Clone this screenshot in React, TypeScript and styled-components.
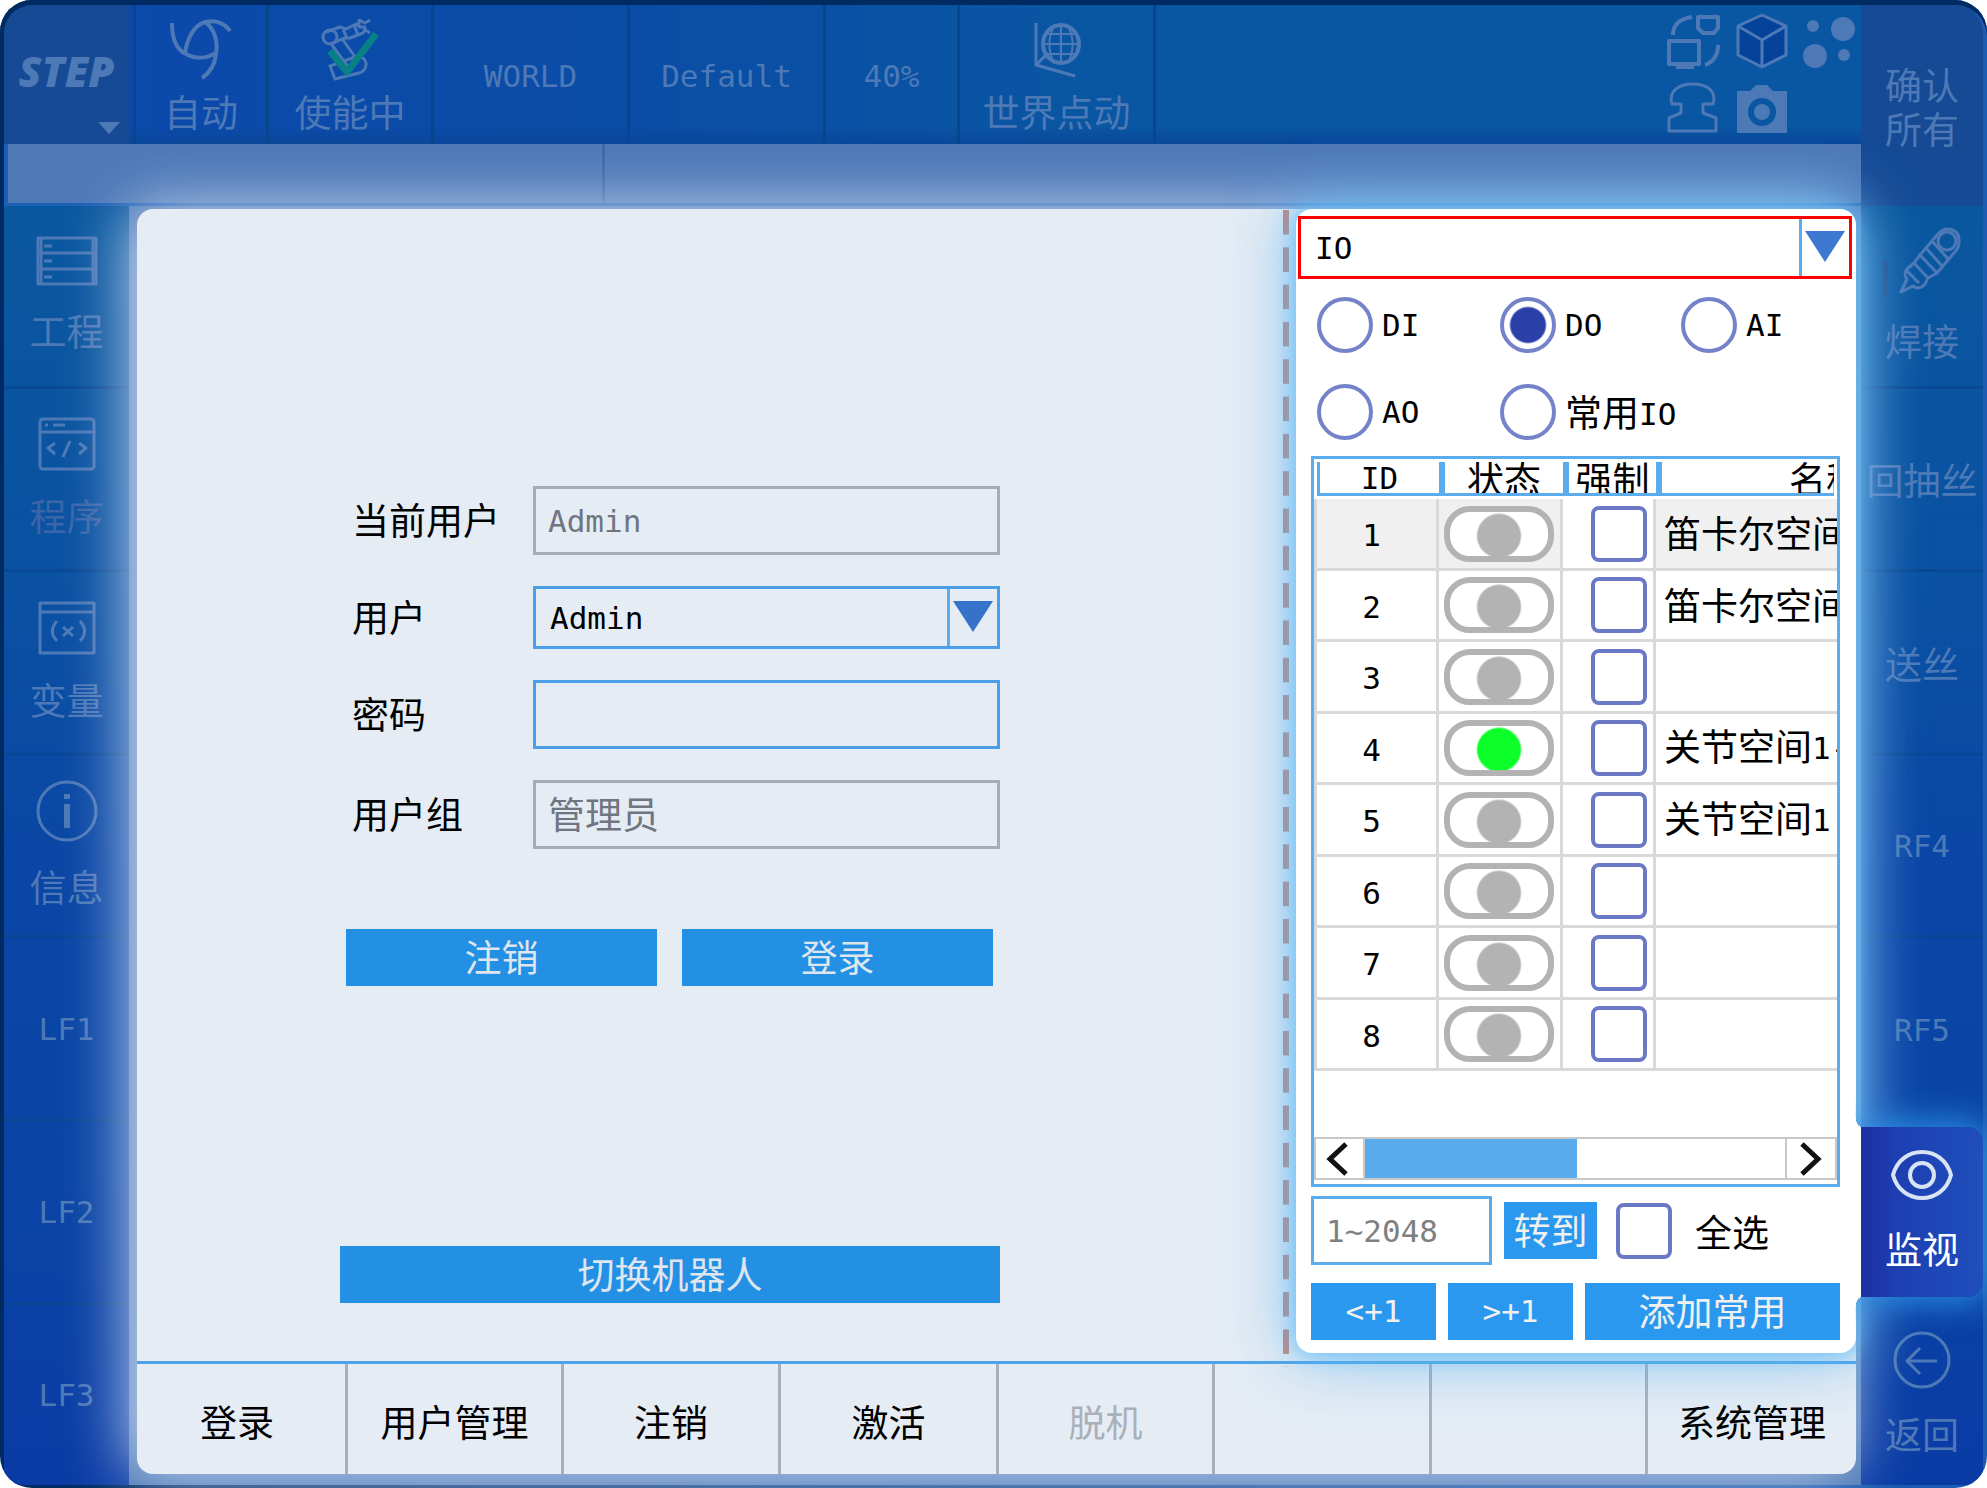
import React from "react";
import styled, { createGlobalStyle, css } from "styled-components";

const MONO = `"DejaVu Sans Mono", "Noto Sans CJK SC", monospace`;
const HAN = `"Noto Sans CJK SC", "Noto Sans", sans-serif`;
const DIM = "#4d79b7";
const SKY = "#5aaced";

const Global = createGlobalStyle`
  *, *::before, *::after { box-sizing: border-box; }
  body { margin: 0; background: #fff; }
  button, input, select { font: inherit; color: inherit; margin: 0; }
`;

const Latin = styled.span`
  font-family: ${MONO};
  font-size: 31px;
  vertical-align: 2px;
`;

const Device = styled.div`
  width: 100%;
  min-height: 100vh;
  display: grid;
  grid-template-columns: 125px minmax(0, 1fr) 122px;
  grid-template-rows: 139px 62px minmax(0, 1fr);
  padding: 5px 4px 3px;
  border-radius: 32px;
  overflow: hidden;
  background: linear-gradient(90deg, #002a62 0, #002a62 4px, #1c5cb4 100%);
  box-shadow: inset 0 5px #002a62;
  font-family: ${HAN};
  font-size: 37px;
  line-height: 44px;
  color: #000;
`;

const PlainButton = styled.button`
  border: 0;
  padding: 0;
  background: none;
  cursor: pointer;
`;

const Logo = styled(PlainButton)`
  position: relative;
  padding-bottom: 8px;
  background: #164a95;
  color: ${DIM};
  font: italic 800 42px/48px "Open Sans", "Noto Sans", sans-serif;
  border-radius: 28px 0 0 0;

  &::after {
    content: "";
    position: absolute;
    right: 9px;
    bottom: 10px;
    border: 11px solid transparent;
    border-top: 12px solid ${DIM};
    border-bottom: 0;
  }
`;

const TopBar = styled.div`
  display: flex;
  min-width: 0;
  color: ${DIM};
  background:
    linear-gradient(180deg, transparent 122px, #09479a 139px),
    linear-gradient(90deg, #0b49ab 0%, #0a4da6 30%, #0956a2 55%, #0956a2 100%);
`;

const Status = styled(PlainButton)<{ $w: number }>`
  width: ${(p) => p.$w}px;
  flex: none;
  display: flex;
  flex-direction: column;
  align-items: center;
  justify-content: center;
  gap: 8px;
  padding-top: 3px;
  border-right: 3px solid #08458a;
  svg { display: block; }

  &:first-child {
    margin-left: 4px;
    border-left: 3px solid #08458a;
  }
`;

const Tools = styled.div`
  margin-left: auto;
  display: grid;
  grid-template-columns: repeat(3, 56px);
  grid-template-rows: 56px 56px;
  column-gap: 12px;
  row-gap: 12px;
  padding: 8px 4px 0 0;
`;

const Confirm = styled(PlainButton)`
  grid-row: span 2;
  background: #164a95;
  color: ${DIM};
  border-radius: 0 28px 0 0;
  display: grid;
  place-content: center;
`;

const Tray = styled.div`
  grid-column: 1 / 3;
  display: grid;
  grid-template-columns: 597px 1fr;
  border-bottom: 3px solid #1c60b6;
  border-left: 4px solid #1c60b6;
  background: #4d79b7;
`;

const TrayCell = styled.div`
  border-right: 3px solid #3c68a6;
  &:last-child { border: 0; }
`;

const Side = styled.nav`
  display: grid;
  grid-template-rows: 183px 183px 184px 182px 184px 183px minmax(0, 1fr);
  background: linear-gradient(180deg, #0a589f 0%, #0a51a2 30%, #0a46a6 52%, #0a45a6 75%, #0a3ba5 100%);
  color: ${DIM};
`;

const SideKey = styled(PlainButton)<{ $faint?: boolean; $last?: boolean; $icon?: boolean }>`
  min-width: 0;
  display: flex;
  flex-direction: column;
  align-items: center;
  justify-content: center;
  gap: 22px;
  padding-bottom: ${(p) => (p.$icon ? 4 : 0)}px;
  white-space: nowrap;
  border-bottom: ${(p) => (p.$last ? "0" : "3px solid rgba(8, 70, 145, 0.8)")};
  color: ${(p) => (p.$faint ? "#3a65a8" : "inherit")};
  svg { display: block; color: ${DIM}; }
`;

const Watch = styled(PlainButton)`
  position: relative;
  z-index: 3;
  margin: 5px 0 8px;
  padding-bottom: 4px;
  display: flex;
  flex-direction: column;
  align-items: center;
  justify-content: center;
  gap: 26px;
  color: #fff;
  border-radius: 0 16px 16px 0;
  background: linear-gradient(90deg, #1b2fa2 0, #1d3fb2 30%, #1f4fbc 100%);
  box-shadow: 0 0 34px 4px #2d93e6;
  clip-path: inset(-50px -4px -50px -6px);

  &::before {
    content: "";
    position: absolute;
    left: -6px;
    top: -14px;
    bottom: -14px;
    width: 6px;
    background:
      radial-gradient(ellipse 6px 14px at 100% 0, transparent 96%, #fff) top / 6px 14px no-repeat,
      linear-gradient(#fff, #fff) center / 6px calc(100% - 28px) no-repeat,
      radial-gradient(ellipse 6px 14px at 100% 100%, transparent 96%, #fff) bottom / 6px 14px no-repeat;
  }
  svg { display: block; color: #d8e4f6; }
`;

const Stage = styled.main`
  min-width: 0;
  display: grid;
  padding: 3px 5px 11px 8px;
  background: #4d79b7;
`;

const Sheet = styled.div`
  position: relative;
  z-index: 1;
  min-width: 0;
  display: grid;
  grid-template-columns: minmax(0, 1fr) 576px;
  grid-template-rows: minmax(0, 1fr) 113px;
  border-radius: 16px;
  background: #e5ecf4;
  box-shadow: -8px 0 62px 0 rgba(215, 228, 250, 0.9);
`;

const LoginArea = styled.section`
  padding: 277px 0 0 203px;
  display: flex;
  flex-direction: column;
  align-items: flex-start;
`;

const Fields = styled.form`
  display: grid;
  grid-template-columns: 181px 467px;
  row-gap: 31px;
  padding-left: 12px;
  align-items: center;

  label { padding-bottom: 3px; }
`;

const boxLook = css`
  width: 100%;
  border: 3px solid #4c9fe6;
  border-radius: 0;
  outline: 0;
  background: transparent;
`;

const Field = styled.input<{ $latin?: boolean }>`
  ${boxLook}
  height: 69px;
  padding: 0 12px 3px;
  color: #707680;
  ${(p) => p.$latin && css`font-family: ${MONO}; font-size: 31px; padding-bottom: 0;`}
  &:read-only { border-color: #a4acb8; }
`;

const SelectWrap = styled.div<{ $alarm?: boolean }>`
  position: relative;
  height: 63px;
  color: ${(p) => (p.$alarm ? "#3d78d0" : "#3672ca")};

  select {
    ${boxLook}
    appearance: none;
    height: 100%;
    padding: 0 60px 0 14px;
    color: #000;
    font-family: ${MONO};
    font-size: 31px;
    border-color: ${(p) => (p.$alarm ? "#ff0000" : "#4c9fe6")};
  }
  &::before {
    content: "";
    position: absolute;
    right: 50px;
    top: 3px;
    bottom: 3px;
    width: 3px;
    background: ${SKY};
    pointer-events: none;
  }
  &::after {
    content: "";
    position: absolute;
    right: 7px;
    top: 15px;
    border: 20px solid transparent;
    border-top: 31px solid;
    border-bottom: 0;
    pointer-events: none;
  }
`;

const Action = styled.button`
  height: 57px;
  padding: 0 0 4px;
  border: 0;
  background: #2490e4;
  color: #dfe5ee;
  cursor: pointer;
`;

const LoginButtons = styled.div`
  display: grid;
  grid-template-columns: 311px 311px;
  gap: 25px;
  padding-left: 6px;
  margin-top: 80px;
`;

const SwitchRobot = styled(Action)`
  width: 660px;
  margin-top: 260px;
`;

const Tabs = styled.nav`
  grid-column: 1 / 3;
  display: grid;
  grid-template-columns: 211fr 216fr 217fr 218fr 216fr 217fr 216fr 208fr;
  border-top: 3px solid #4fa3e8;
`;

const Tab = styled(PlainButton)`
  padding-top: 4px;
  border-right: 3px solid #a8b0bc;
  white-space: nowrap;
  color: #000;
  &:disabled { color: #a9b0ba; }
  &:first-child { padding-right: 8px; }
  &:last-child { border: 0; }
`;

const MonitorSlot = styled.div`
  display: flex;
  padding: 0 0 8px 8px;
  position: relative;

  &::before {
    content: "";
    position: absolute;
    left: 3px;
    top: 1px;
    bottom: -6px;
    width: 6px;
    background: linear-gradient(180deg, #c4857a 25px, transparent 25px) top / 6px 37px round;
  }
`;

const Monitor = styled.section`
  position: relative;
  flex: 1;
  min-width: 0;
  margin-left: 8px;
  background: #fff;
  border-radius: 16px;
  box-shadow: 0 0 18px 2px rgba(96, 190, 248, 0.7), 0 0 64px 2px rgba(90, 180, 244, 0.8);
  padding: 7px 4px 0 2px;
`;

const MonitorBody = styled.div`
  padding: 0 12px 0 13px;
`;

const Radios = styled.fieldset`
  border: 0;
  margin: 0;
  padding: 18px 0 16px 6px;
  display: grid;
  grid-template-columns: 183px 181px 1fr;
  row-gap: 31px;
`;

const RadioLabel = styled.label`
  display: flex;
  align-items: center;
  gap: 9px;
  height: 56px;
  white-space: nowrap;

  input {
    appearance: none;
    flex: none;
    width: 56px;
    height: 56px;
    border: 4px solid #7482ca;
    border-radius: 50%;
    background: #fff;
  }
  input:checked {
    background: radial-gradient(circle, #2b3fa9 17px, #fff 19px);
  }
`;

const TableFrame = styled.div`
  height: 731px;
  border: 3px solid ${SKY};
  display: flex;
  flex-direction: column;
  overflow: hidden;
`;

const Grid = styled.table`
  table-layout: fixed;
  width: 100%;
  border-collapse: separate;
  border-spacing: 0;
`;

const HeadCell = styled.th`
  height: 40px;
  padding: 3px 0;
  font-weight: 400;
  overflow: hidden;
  white-space: nowrap;
`;

const HeadLabel = styled.div<{ $edge?: boolean; $end?: boolean }>`
  height: 34px;
  display: flex;
  align-items: center;
  justify-content: ${(p) => (p.$end ? "flex-end" : "center")};
  overflow: hidden;
  margin: 0 ${(p) => (p.$end ? 3 : 0)}px 0 ${(p) => (p.$edge ? 3 : 0)}px;
  border-bottom: 3px solid ${SKY};
  border-left: ${(p) => (p.$edge ? 3 : 6)}px solid ${SKY};
`;

const Clip = styled.span`
  width: 45px;
  flex: none;
  overflow: hidden;
`;

const Row = styled.tr<{ $lit?: boolean }>`
  background: ${(p) => (p.$lit ? "#f0f0f0" : "#fff")};
  td { height: 72px; }
  &:nth-child(even) td { height: 71px; }
`;

const Cell = styled.td<{ $white?: boolean; $name?: boolean; $num?: boolean }>`
  padding: ${(p) => (p.$name ? "0 0 3px 8px" : p.$num ? "0 10px 0 0" : "0 2px 0 0")};
  text-align: ${(p) => (p.$name ? "left" : "center")};
  border-right: ${(p) => (p.$name ? 0 : 3)}px solid #d9d9d9;
  border-left: ${(p) => (p.$num ? 3 : 0)}px solid #d9d9d9;
  border-bottom: 3px solid #d9d9d9;
  ${(p) => p.$white && "background: #fff;"}
  overflow: hidden;
  white-space: nowrap;
`;

const Lamp = styled.span<{ $on?: boolean }>`
  display: block;
  width: 110px;
  height: 56px;
  margin: 0 auto;
  border: 6px solid #b3b3b3;
  border-radius: 26px;
  background: radial-gradient(circle at 50% 54%, ${(p) => (p.$on ? "#0dff2a" : "#b3b3b3")} 21px, #fff 23px);
`;

const Tick = styled.input`
  appearance: none;
  display: block;
  flex: none;
  width: 56px;
  height: 56px;
  border: 4px solid #6b78c5;
  border-radius: 8px;
  background: #fff;
`;

const TickHolder = styled.div`
  display: flex;
  justify-content: flex-end;
  padding-right: 4px;
`;

const Scroll = styled.div`
  margin-top: auto;
  margin-bottom: 4px;
  height: 43px;
  flex: none;
  display: grid;
  grid-template-columns: 49px 1fr 50px;
  border: 2px solid #c8c8c8;
`;

const Arrow = styled(PlainButton)`
  display: grid;
  place-items: center;
  border: 0 solid #c8c8c8;
  &:first-child { border-right-width: 2px; padding-right: 6px; }
  &:last-child { border-left-width: 2px; }
`;

const Thumb = styled.div`
  width: 212px;
  background: ${SKY};
`;

const GoRow = styled.div`
  display: flex;
  align-items: center;
  margin-top: 9px;
`;

const GoInput = styled(Field)`
  width: 181px;
  border-color: ${SKY};
  padding: 0 12px;
  margin-right: 12px;
  &::placeholder { color: #808080; opacity: 1; }
`;

const BlueButton = styled(Action)<{ $w?: number }>`
  background: #2998ee;
  color: #f0f0f0;
  width: ${(p) => (p.$w ? `${p.$w}px` : "auto")};
`;

const AllLabel = styled.label`
  display: flex;
  align-items: center;
  gap: 23px;
  margin-left: 19px;
`;

const StepRow = styled.div`
  display: grid;
  grid-template-columns: 125px 125px 1fr;
  gap: 12px;
  margin-top: 18px;
`;

type G = { w: number; h: number; box: string; children: React.ReactNode; sw?: number };
const Glyph = ({ w, h, box, children, sw = 3 }: G) => (
  <svg width={w} height={h} viewBox={box} fill="none" stroke="currentColor" strokeWidth={sw} strokeLinejoin="round" aria-hidden="true">
    {children}
  </svg>
);

const AutoIcon = () => (
  <Glyph w={64} h={62} box="0 0 64 62" sw={4}>
    <path d="M3 4C3 20 8 31 17 35c9 5 21 5 29-1M61 12C55 3 45 1 36 3 25 6 18 20 16 34M36 3c10 7 13 20 11 32-1 12-7 19-14 24" />
  </Glyph>
);

const RobotIcon = () => (
  <Glyph w={64} h={62} box="0 0 64 62" sw={3}>
    <path d="M8 13l14-5 6 2 10-5 4 3 6 0M12 25l15-6 5 0 13-5 3-5M24 8l5 11M36 6l4 10M41 6V1l6 3 5-3M46 10l6 4M14 26l16 22M25 21l15 21M12 47l25-9c14-3 14 14 4 16l-24 6z" />
    <circle cx="12" cy="18" r="7" />
    <path d="M12 32l17 21L58 15" stroke="#078186" strokeWidth="7" />
  </Glyph>
);

const WorldIcon = () => (
  <Glyph w={50} h={62} box="0 0 50 62" sw={2}>
    <ellipse cx="29" cy="25" rx="18" ry="19" strokeWidth="4" />
    <path d="M29 5v40M11 25h36M14 15h30M14 35h30M22 7c-6 12-6 25 0 37M36 7c6 12 6 25 0 37" />
    <path d="M4 4v42l39 11M4 46l12-12" strokeWidth="3" />
  </Glyph>
);

const SwapIcon = () => (
  <Glyph w={56} h={56} box="0 0 56 56">
    <path d="M4 28h30v23H4zM11 55h18M33 4h20v11l-4 5h-11l-5-5zM8 22C8 12 14 6 27 4M53 32c0 10-5 17-13 20" strokeWidth="4" />
  </Glyph>
);
const CubeIcon = () => (
  <Glyph w={56} h={56} box="0 0 56 56">
    <path d="M29 2l24 11v29L29 54 5 42V13z" fill="#05439a" />
    <path d="M5 13l24 14 24-14M29 27v27" />
  </Glyph>
);
const DotsIcon = () => (
  <svg width="56" height="56" viewBox="0 0 56 56" fill="currentColor" aria-hidden="true">
    <circle cx="12" cy="13" r="6" /><circle cx="42" cy="16" r="12" /><circle cx="14" cy="43" r="12" /><circle cx="43" cy="42" r="6" />
  </svg>
);
const StampIcon = () => (
  <Glyph w={56} h={56} box="0 0 56 56">
    <path d="M4 50V37l12-5v-9H7C3 10 14 3 28 3s24 7 20 20H38v9l13 5v13z" />
  </Glyph>
);
const CameraIcon = () => (
  <svg width="56" height="56" viewBox="0 0 56 56" fill="currentColor" aria-hidden="true">
    <path fillRule="evenodd" d="M4 10h13l6-6h11l6 6h14v42H4zM29 17a14 14 0 1 0 0 28 14 14 0 0 0 0-28z" />
    <circle cx="29" cy="31" r="8" />
  </svg>
);

const ProjectIcon = () => (
  <Glyph w={62} h={50} box="0 0 62 50">
    <rect x="2" y="2" width="58" height="46" /><path d="M2 17h58M2 33h58M5 2v46M57 2v46M8 10h8M8 25h8M8 41h8" />
  </Glyph>
);
const CodeIcon = () => (
  <Glyph w={58} h={54} box="0 0 58 54">
    <rect x="2" y="2" width="54" height="50" rx="3" /><path d="M2 15h54M7 8h3M15 8h12M17 26l-7 5 7 6M41 26l7 5-7 6M32 24l-7 16" />
  </Glyph>
);
const VarIcon = () => (
  <Glyph w={58} h={54} box="0 0 58 54">
    <rect x="2" y="2" width="54" height="50" /><path d="M2 11h54M19 20c-6 7-6 14 0 20M42 20c6 7 6 14 0 20M25 26l10 9M35 26l-10 9" />
  </Glyph>
);
const InfoIcon = () => (
  <Glyph w={62} h={62} box="0 0 62 62">
    <circle cx="31" cy="31" r="29" /><path d="M31 24v24M31 14v5" strokeWidth="6" />
  </Glyph>
);
const WeldIcon = () => (
  <Glyph w={80} h={70} box="-16 0 80 70">
    <path d="M40 8c8-9 22-5 21 8 0 5-2 8-5 11L39 47 22 29z" />
    <circle cx="49" cy="15" r="9" />
    <path d="M34 15l17 19M28 22l17 19M22 29l-6 8 14 15 9-5M16 37l-7 6c-3 4-2 8 0 10l-6 13 12-6c5 4 11 1 13-4l2-4M8 44l13 13" />
    <path d="M-13 34v38" stroke="#164a8c" strokeWidth="5" />
  </Glyph>
);
const EyeIcon = () => (
  <Glyph w={62} h={50} box="0 0 62 50" sw={4}>
    <path d="M2 25C6 10 18 2 31 2s25 8 29 23C56 40 44 48 31 48S6 40 2 25z" /><circle cx="31" cy="25" r="12" />
  </Glyph>
);
const BackIcon = () => (
  <Glyph w={58} h={58} box="0 0 58 58">
    <circle cx="29" cy="29" r="27" /><path d="M44 30H15M27 17L14 30l13 13" />
  </Glyph>
);

const names = ["笛卡尔空间", "笛卡尔空间", "", "关节空间|1-", "关节空间|1", "", "", ""];

export default function App() {
  return (
    <Device>
      <Global />
      <Logo type="button">STEP</Logo>
      <TopBar>
        <Status $w={136} type="button"><AutoIcon />自动</Status>
        <Status $w={165} type="button"><RobotIcon />使能中</Status>
        <Status $w={196} type="button"><Latin>WORLD</Latin></Status>
        <Status $w={196} type="button"><Latin>Default</Latin></Status>
        <Status $w={134} type="button"><Latin>40%</Latin></Status>
        <Status $w={196} type="button"><WorldIcon />世界点动</Status>
        <Tools>
          <PlainButton type="button" aria-label="切换窗口"><SwapIcon /></PlainButton>
          <PlainButton type="button" aria-label="三维"><CubeIcon /></PlainButton>
          <PlainButton type="button" aria-label="点位"><DotsIcon /></PlainButton>
          <PlainButton type="button" aria-label="工具"><StampIcon /></PlainButton>
          <PlainButton type="button" aria-label="截图"><CameraIcon /></PlainButton>
        </Tools>
      </TopBar>
      <Confirm type="button"><span>确认</span><span>所有</span></Confirm>
      <Tray><TrayCell /><TrayCell /></Tray>

      <Side>
        <SideKey type="button" $icon><ProjectIcon />工程</SideKey>
        <SideKey type="button" $icon $faint><CodeIcon />程序</SideKey>
        <SideKey type="button" $icon><VarIcon />变量</SideKey>
        <SideKey type="button" $icon><InfoIcon />信息</SideKey>
        <SideKey type="button"><Latin>LF1</Latin></SideKey>
        <SideKey type="button"><Latin>LF2</Latin></SideKey>
        <SideKey type="button" $last><Latin>LF3</Latin></SideKey>
      </Side>

      <Stage>
        <Sheet>
          <LoginArea>
            <Fields onSubmit={(e) => e.preventDefault()}>
              <label htmlFor="current">当前用户</label>
              <Field id="current" $latin readOnly value="Admin" />
              <label htmlFor="user">用户</label>
              <SelectWrap><select id="user"><option>Admin</option></select></SelectWrap>
              <label htmlFor="pass">密码</label>
              <Field id="pass" type="password" />
              <label htmlFor="group">用户组</label>
              <Field id="group" readOnly value="管理员" />
            </Fields>
            <LoginButtons>
              <Action type="button">注销</Action>
              <Action type="button">登录</Action>
            </LoginButtons>
            <SwitchRobot type="button">切换机器人</SwitchRobot>
          </LoginArea>

          <MonitorSlot>
            <Monitor>
              <SelectWrap $alarm><select aria-label="监视类型"><option>IO</option></select></SelectWrap>
              <MonitorBody>
                <Radios>
                  <RadioLabel><input type="radio" name="io" /><Latin>DI</Latin></RadioLabel>
                  <RadioLabel><input type="radio" name="io" defaultChecked /><Latin>DO</Latin></RadioLabel>
                  <RadioLabel><input type="radio" name="io" /><Latin>AI</Latin></RadioLabel>
                  <RadioLabel><input type="radio" name="io" /><Latin>AO</Latin></RadioLabel>
                  <RadioLabel><input type="radio" name="io" /><span>常用<Latin>IO</Latin></span></RadioLabel>
                </Radios>
                <TableFrame>
                  <Grid>
                    <colgroup>
                      <col style={{ width: 125 }} /><col style={{ width: 124 }} /><col style={{ width: 93 }} /><col />
                    </colgroup>
                    <thead>
                      <tr>
                        <HeadCell><HeadLabel $edge><Latin>ID</Latin></HeadLabel></HeadCell>
                        <HeadCell><HeadLabel>状态</HeadLabel></HeadCell>
                        <HeadCell><HeadLabel>强制</HeadLabel></HeadCell>
                        <HeadCell><HeadLabel $end><Clip>名称</Clip></HeadLabel></HeadCell>
                      </tr>
                    </thead>
                    <tbody>
                      {names.map((name, i) => {
                        const [han, tail] = name.split("|");
                        return (
                          <Row key={i} $lit={i === 0}>
                            <Cell $num><Latin>{i + 1}</Latin></Cell>
                            <Cell><Lamp $on={i === 3} /></Cell>
                            <Cell $white><TickHolder><Tick type="checkbox" aria-label={`强制 ${i + 1}`} /></TickHolder></Cell>
                            <Cell $name>{han}{tail && <Latin>{tail}</Latin>}</Cell>
                          </Row>
                        );
                      })}
                    </tbody>
                  </Grid>
                  <Scroll>
                    <Arrow type="button" aria-label="向左"><svg width="22" height="34" viewBox="0 0 22 34" fill="none" stroke="#111" strokeWidth="5"><path d="M20 2L4 17l16 15" /></svg></Arrow>
                    <Thumb />
                    <Arrow type="button" aria-label="向右"><svg width="22" height="34" viewBox="0 0 22 34" fill="none" stroke="#111" strokeWidth="5"><path d="M2 2l16 15L2 32" /></svg></Arrow>
                  </Scroll>
                </TableFrame>
                <GoRow>
                  <GoInput $latin placeholder="1~2048" aria-label="编号" />
                  <BlueButton $w={93} type="button">转到</BlueButton>
                  <AllLabel><Tick type="checkbox" />全选</AllLabel>
                </GoRow>
                <StepRow>
                  <BlueButton type="button"><Latin>&lt;+1</Latin></BlueButton>
                  <BlueButton type="button"><Latin>&gt;+1</Latin></BlueButton>
                  <BlueButton type="button">添加常用</BlueButton>
                </StepRow>
              </MonitorBody>
            </Monitor>
          </MonitorSlot>

          <Tabs>
            <Tab type="button">登录</Tab>
            <Tab type="button">用户管理</Tab>
            <Tab type="button">注销</Tab>
            <Tab type="button">激活</Tab>
            <Tab type="button" disabled>脱机</Tab>
            <Tab type="button" aria-label="F6" />
            <Tab type="button" aria-label="F7" />
            <Tab type="button">系统管理</Tab>
          </Tabs>
        </Sheet>
      </Stage>

      <Side>
        <SideKey type="button" $icon><WeldIcon />焊接</SideKey>
        <SideKey type="button">回抽丝</SideKey>
        <SideKey type="button">送丝</SideKey>
        <SideKey type="button"><Latin>RF4</Latin></SideKey>
        <SideKey type="button" $last><Latin>RF5</Latin></SideKey>
        <Watch type="button"><EyeIcon />监视</Watch>
        <SideKey type="button" $icon $last><BackIcon />返回</SideKey>
      </Side>
    </Device>
  );
}
